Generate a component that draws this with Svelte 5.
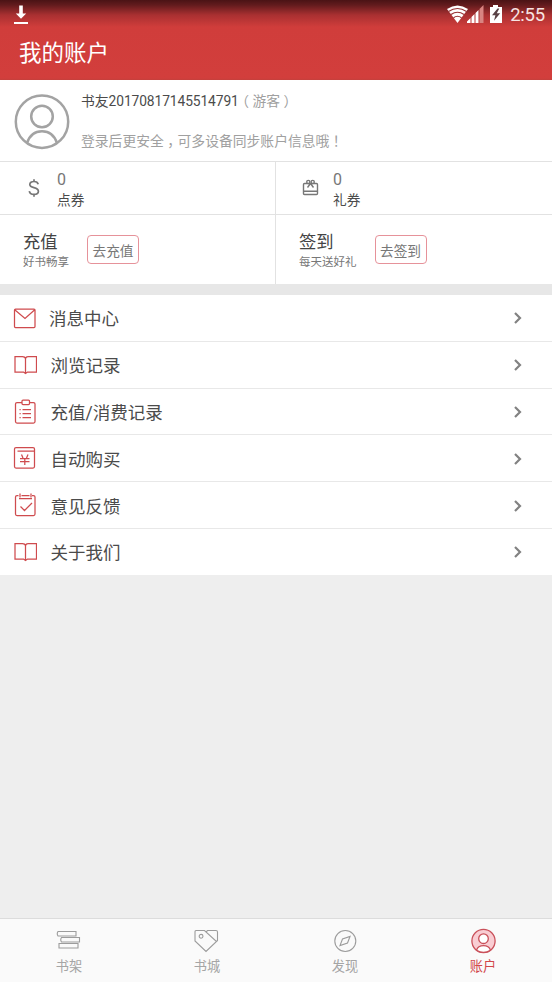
<script lang="ts">
  const book = 'M2 3.5H9.5Q12 3.5 12.5 5.5Q13 3.5 15 3.5H23.5V19H14.5L12.5 20.5L10.5 19H2ZM12.5 5V20.5';

  const menu = [
    { label: '消息中心', gap: 0, icon: 'M2.5 3H21Q22 3 22 4V20.5Q22 21.5 21 21.5H2.5Q1.5 21.5 1.5 20.5V4Q1.5 3 2.5 3ZM2 4L12 12.5L21.5 4' },
    { label: '浏览记录', gap: 1, icon: book },
    { label: '充值/消费记录', gap: 1, icon: 'M9 3.5H4Q2.5 3.5 2.5 5V22.5Q2.5 24 4 24H20.5Q22 24 22 22.5V5Q22 3.5 20.5 3.5H16.5M10 1H15.5Q16.5 1 16.5 2V4.5Q16.5 5.5 15.5 5.5H10Q9 5.5 9 4.5V2Q9 1 10 1ZM9.5 10.5H18M9.5 14.5H18M9.5 18.5H18M6.5 10.5H7.7M6.5 14.5H7.7M6.5 18.5H7.7' },
    { label: '自动购买', gap: 1, icon: 'M3 1.5H20Q21.5 1.5 21.5 3V20.5Q21.5 22 20 22H3Q1.5 22 1.5 20.5V3Q1.5 1.5 3 1.5ZM4.5 5H21.5M8.5 8.5L10 12M15 8.5L13.5 12M7 12.5H16.5M7 15.5H16.5M11.8 12V19' },
    { label: '意见反馈', gap: 1, icon: 'M5.5 2.5H4Q2.5 2.5 2.5 4V21Q2.5 22.5 4 22.5H20.5Q22 22.5 22 21V4Q22 2.5 20.5 2.5H19M8.5 2.5H16.5M7 .5V4.5M18 .5V4.5M6 5.5H19M7.5 13.5L11.5 17.5L19 10' },
    { label: '关于我们', gap: 1, icon: book }
  ];

  const tabs = [
    { label: '书架', icon: 'M2 3.5H20V8H2Q0.5 5.7 2 3.5ZM5.5 9.5H23.5V14H5.5Q4 11.7 5.5 9.5ZM3 15.5H22V20H3Z' },
    { label: '书城', icon: 'M2 2.5H10.5L22.5 13.5L12 23.5L1 13V3.5Q1 2.5 2 2.5ZM12 4L13.5 2.5H22Q23.5 2.5 23.5 4V12.5L22.5 13.5M9 8.3A1.9 1.9 0 1 1 5.2 8.3A1.9 1.9 0 1 1 9 8.3' },
    { label: '发现', icon: 'M23.8 13A10.5 10.5 0 1 1 2.8 13A10.5 10.5 0 1 1 23.8 13M18 8.5L15.5 15L8 17.5L10.5 11Z' },
    { label: '账户', icon: '' }
  ];

  let active = '账户';
</script>

<div class="screen">
  <header>
    <div class="status">
      <svg class="download" width="15" height="20" viewBox="0 0 15 20">
        <path d="M5.2 0.5h3.6v8h3.4L7 13.8 1.8 8.5h3.4zM0 17h14v2H0z" fill="#fff" />
      </svg>
      <div class="indicators">
        <svg width="58" height="20" viewBox="0 0 58 20">
          <path d="M0 5Q10.5-2 21 5L10.5 19Z" fill="#fff" />
          <g fill="none" stroke="#963032" stroke-width="1.1">
            <path d="M1.5 7.5Q10.5 1.5 19.5 7.5M4 10.5Q10.5 6 17 10.5M6.5 13.7Q10.5 10.9 14.5 13.7" />
          </g>
          <path d="M20 19V17.5L23.5 14V19ZM24.5 19V13L27.5 10V19ZM28.5 19V9L31.5 6V19Z" fill="#fff" />
          <path d="M32.5 19V5L36.5 1V19Z" fill="#d98481" />
          <path d="M46 1H51V3H55V19H43V3H46Z" fill="#fff" />
          <path d="M50.5 4.5L45 11.3H48.4L47 16.8L53.2 9.3H49.8L52.3 4.5Z" fill="#594145" />
        </svg>
        <span class="clock">2:55</span>
      </div>
    </div>
    <h1>我的账户</h1>
  </header>

  <section class="profile">
    <svg width="56" height="56" viewBox="0 0 56 56" fill="none" stroke="#a3a3a3" stroke-width="2.5">
      <circle cx="28" cy="27.7" r="26.2" />
      <circle cx="28" cy="22.5" r="10.8" />
      <path d="M13 49.2C15.5 41.5 21 37.3 28 37.3S40.5 41.5 43 49.2" />
    </svg>
    <div class="profile-text">
      <p class="name">书友<span class="digits">20170817145514791</span><span class="guest"><i>（</i>游客<i>）</i></span></p>
      <p class="hint">登录后更安全<i>，</i>可多设备同步账户信息哦<i>！</i></p>
    </div>
  </section>

  <section class="wallet">
    <div class="balance">
      <svg width="20" height="24" viewBox="0 0 20 24" fill="none" stroke="#777" stroke-width="1.7">
        <path d="M14.2 8.3C13.8 6.5 12.2 5.5 10 5.5C7.5 5.5 5.8 6.6 5.8 8.5C5.8 12.8 14.4 10.5 14.4 15.2C14.4 17.1 12.6 18.4 10 18.4C7.4 18.4 5.6 17.2 5.3 15.1M10 3.2V5.5M10 18.4V20.8" />
      </svg>
      <div><b>0</b><span>点券</span></div>
    </div>
    <div class="balance">
      <svg width="20" height="24" viewBox="0 0 20 24" fill="none" stroke="#777" stroke-width="1.4">
        <path d="M4.5 7.5H16.5Q17.5 7.5 17.5 8.5V17.5Q17.5 18.5 16.5 18.5H4.5Q3.5 18.5 3.5 17.5V8.5Q3.5 7.5 4.5 7.5ZM3.5 15.3H17.5M10.5 7.5L7.5 11.5M10.5 7.5L13.5 11.5" />
        <circle cx="8.3" cy="6" r="1.6" />
        <circle cx="12.7" cy="6" r="1.6" />
      </svg>
      <div><b>0</b><span>礼券</span></div>
    </div>
    <div class="action">
      <div><strong>充值</strong><small>好书畅享</small></div>
      <button>去充值</button>
    </div>
    <div class="action">
      <div><strong>签到</strong><small>每天送好礼</small></div>
      <button>去签到</button>
    </div>
  </section>

  <ul class="menu">
    {#each menu as item}
      <li>
        <svg class="icon" width="24" height="25" viewBox="0 0 24 25">
          <path d={item.icon} />
        </svg>
        <span class:indent={item.gap}>{item.label}</span>
        <svg class="chevron" width="10" height="14" viewBox="0 0 10 14">
          <path d="M2 2L7 7L2 12" />
        </svg>
      </li>
    {/each}
  </ul>

  <nav>
    {#each tabs as tab}
      <button class="tab" class:active={tab.label === active} on:click={() => active = tab.label}>
        <svg width="26" height="26" viewBox="0 0 26 26">
          {#if tab.icon}
            <path d={tab.icon} />
          {:else}
            <circle class="disc" cx="13.5" cy="13" r="11.6" />
            <circle class="face" cx="13.5" cy="10.7" r="4.8" />
            <path class="face" d="M6.5 22.2Q8 17.6 13.5 17.6T20.5 22.2Q13.5 26.5 6.5 22.2Z" />
          {/if}
        </svg>
        <span>{tab.label}</span>
      </button>
    {/each}
  </nav>
</div>

<style>
  :global(body) {
    margin: 0;
  }
  .screen {
    display: flex;
    flex-direction: column;
    height: 982px;
    background: #eee;
    color: #4b4b4b;
    font-family: Roboto, "Noto Sans CJK SC", sans-serif;
  }
  h1, p, ul {
    margin: 0;
    padding: 0;
    font-weight: 400;
  }
  button {
    font-family: inherit;
    padding: 0;
    cursor: pointer;
  }
  svg {
    flex: none;
    display: block;
  }
  header {
    box-sizing: border-box;
    height: 80px;
    color: #fff;
    background: linear-gradient(#4a1315 0, #621b1d 5px, #a93031 15px, #d03d3b 27px, #d23e3c 78px, #c4403c 80px);
  }
  .status {
    display: flex;
    justify-content: space-between;
    height: 30px;
    padding: 0 7px 0 14px;
  }
  .download {
    margin-top: 5px;
  }
  .indicators {
    display: flex;
    padding-top: 4px;
  }
  .clock {
    margin-left: 5px;
    font-size: 18.5px;
    line-height: 22px;
    letter-spacing: -0.2px;
    color: #f7e4e3;
  }
  h1 {
    padding-left: 19px;
    font-size: 22.5px;
    line-height: 46px;
  }
  .profile {
    box-sizing: border-box;
    display: flex;
    height: 82px;
    padding: 14px 14px 0;
    background: #fff;
    border-bottom: 1px solid #e2e2e2;
    font-size: 13.8px;
  }
  .profile-text {
    margin-left: 11px;
    white-space: nowrap;
  }
  .profile p {
    line-height: 16px;
  }
  .profile .name {
    line-height: 14px;
  }
  .profile .hint {
    margin-top: 25px;
    color: #a0a0a0;
  }
  .digits {
    letter-spacing: -0.1px;
  }
  .guest {
    color: #a0a0a0;
  }
  /* half-width punctuation centred in a full-width cell */
  i {
    font-style: normal;
    font-feature-settings: "halt";
    padding: 0 0.25em;
  }
  .wallet {
    display: grid;
    grid-template-columns: 276px 276px;
    grid-template-rows: 53px 69px;
    background: #fff;
    border-bottom: 11px solid #e7e7e7;
  }
  .wallet > div {
    display: flex;
    box-sizing: border-box;
  }
  .wallet > div:nth-child(odd) {
    border-right: 1px solid #e2e2e2;
  }
  .balance {
    padding: 14px 0 0 24px;
    border-bottom: 1px solid #e2e2e2;
  }
  .balance div {
    display: flex;
    flex-direction: column;
    margin: -6px 0 0 13px;
  }
  .balance b {
    font-size: 16px;
    font-weight: 400;
    line-height: 20px;
    color: #777;
  }
  .balance span {
    font-size: 13.7px;
    line-height: 20px;
  }
  .action {
    padding-left: 23px;
  }
  .action div {
    display: flex;
    flex-direction: column;
    padding-top: 15px;
  }
  .action strong {
    font-size: 17.3px;
    font-weight: 400;
    line-height: 25px;
    color: #444;
  }
  .action small {
    font-size: 11.5px;
    line-height: 14px;
    color: #777;
  }
  .action button {
    box-sizing: border-box;
    width: 52px;
    height: 29px;
    margin: 20px 0 0 18px;
    font-size: 13.7px;
    color: #777;
    background: #fff;
    border: 1px solid #e6929a;
    border-radius: 4px;
  }
  .menu {
    list-style: none;
    background: #fff;
  }
  .menu li {
    box-sizing: border-box;
    display: flex;
    align-items: center;
    height: 46.8px;
    padding: 0 29px 0 12.5px;
    border-bottom: 1px solid #e8e8e8;
    font-size: 17.5px;
    line-height: 26px;
  }
  .menu li:last-child {
    height: 46px;
    border-bottom: 0;
  }
  .menu span {
    margin-left: 12.5px;
    padding-top: 3px;
  }
  .menu .indent {
    margin-left: 14px;
  }
  .icon {
    margin-top: 1px;
    fill: none;
    stroke: #cf4b4e;
    stroke-width: 1.25;
  }
  .chevron {
    margin-left: auto;
    margin-top: 1px;
    fill: none;
    stroke: #828282;
    stroke-width: 2.2;
  }
  nav {
    box-sizing: border-box;
    display: flex;
    height: 64px;
    margin-top: auto;
    background: #fafafa;
    border-top: 1px solid #dcdcdc;
  }
  .tab {
    flex: 1;
    display: flex;
    flex-direction: column;
    align-items: center;
    padding-top: 9px;
    background: none;
    border: 0;
    color: #a5a5a5;
    font-size: 13.2px;
    line-height: 20px;
  }
  .tab span {
    margin-top: 3px;
  }
  .tab svg {
    fill: none;
    stroke: #9c9c9c;
    stroke-width: 1.1;
  }
  .active {
    color: #d2474a;
  }
  .active svg {
    stroke: #c9505a;
    stroke-width: 1.3;
  }
  .disc {
    fill: #f9cdd3;
  }
  .face {
    fill: #fff;
  }
</style>
